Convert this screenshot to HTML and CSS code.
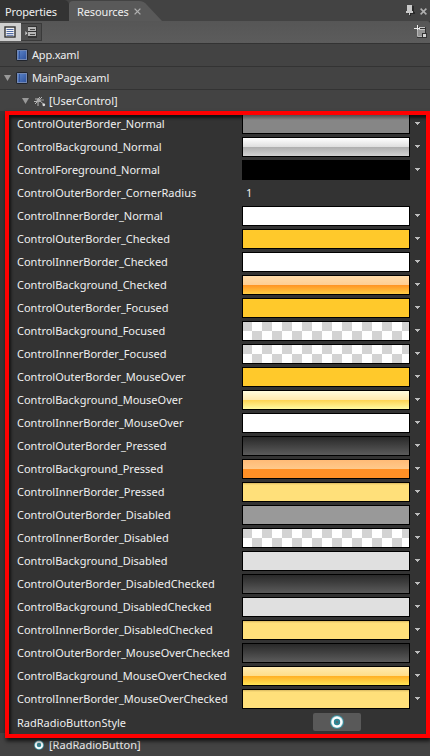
FILE: index.html
```
<!DOCTYPE html>
<html lang="en">
<head>
<meta charset="utf-8">
<title>Resources</title>
<link rel="stylesheet" href="styles.css">
</head>
<body>
<svg width="0" height="0" class="defs">
  <defs>
    <linearGradient id="blue" x1="0" y1="0" x2="1" y2="1"><stop offset="0" stop-color="#5d87cc"/><stop offset="1" stop-color="#2f529c"/></linearGradient>
    <symbol id="doc" viewBox="0 0 12 12"><rect x=".5" y=".5" width="11" height="11" rx="1" fill="#263556" stroke="#20242c"/><rect x="1.5" y="1.5" width="9" height="9" fill="url(#blue)" stroke="#7388b3"/><path d="M3.5 2v8" stroke="#34559b"/></symbol>
    <symbol id="radio" viewBox="0 0 14 14"><circle cx="7" cy="7" r="7" fill="#3b8b99"/><circle cx="7" cy="7" r="6" fill="#c5e2e8"/><circle cx="7" cy="7" r="5.2" fill="#fff"/><circle cx="7" cy="7" r="3.2" fill="#2e8797"/><circle cx="7" cy="7" r="1.2" fill="#5a6c70"/></symbol>
  </defs>
</svg>
<div class="panel">
  <header class="tabs">
    <div class="tab"><span>Properties</span></div>
    <div class="tab-active">
      <svg class="tab-shape" width="94" height="21" viewBox="0 0 94 21"><path d="M0 21V5q0-4 4-4h66q5 0 8 4l15 16z" fill="#595959"/></svg>
      <span>Resources</span>
      <svg class="close" width="7" height="7" viewBox="0 0 7 7"><path d="M.6.6l5.8 5.8M6.4.6L.6 6.4" stroke="#b0b0b0" stroke-width="1.3"/></svg>
    </div>
    <svg class="pin" width="11" height="12" viewBox="0 0 11 12"><path d="M3 1h6v6h1v2H6v2H5V9H3z" fill="#292929"/><path d="M2 0h5v6H2z" fill="#c9c9c9"/><path d="M1 6h7v2H1zM4 8h1v2H4z" fill="#c9c9c9"/></svg>
    <svg class="panel-close" width="7" height="7" viewBox="0 0 7 7"><path d="M.6.6l5.8 5.8M6.4.6L.6 6.4" stroke="#b0b0b0" stroke-width="1.5"/></svg>
  </header>
  <div class="toolbar">
    <div class="tool on"><svg width="12" height="12" viewBox="0 0 12 12"><rect x="1" y="1" width="10" height="10" fill="#f4f4f4" stroke="#333" stroke-width="1.4"/><path d="M2.5 3.5h7M2.5 5.5h7M2.5 7.5h7M2.5 9.3h7" stroke="#526ca6"/></svg></div>
    <div class="tool"><svg width="12" height="12" viewBox="0 0 12 12"><path d="M3 0h9v12H3z" fill="#333"/><path d="M3 1h8v4H3zM3 6h8v4H3z" fill="#b5b5b5"/><path d="M5 3.5h5M5 8.5h5" stroke="#444"/><path d="M0 4.5l3 2.7L0 10z" fill="#ccc" stroke="#333" stroke-width=".6"/></svg></div>
    <svg class="add" width="13" height="14" viewBox="0 0 13 14"><path d="M3 2h9v11H3z" fill="#333"/><path d="M4 4h7v7H4z" fill="#929292"/><path d="M5 2.5h6M5 4.5h6" stroke="#c4c4c4"/><path d="M0 3.5h6M3.5 0v6" stroke="#ededed"/><path d="M3.5 5v6.5H8" fill="none" stroke="#b5b5b5"/><rect x="8.5" y="8.5" width="4" height="4" fill="#d5d5d5" stroke="#333"/></svg>
  </div>
  <div class="tree">
    <div class="node"><i class="gap"></i><svg class="doc" width="12" height="12"><use href="#doc"/></svg><span>App.xaml</span></div>
    <div class="node"><svg class="exp" width="7" height="6" viewBox="0 0 7 6"><path d="M0 0h7L3.5 6z" fill="#999"/></svg><svg class="doc" width="12" height="12"><use href="#doc"/></svg><span>MainPage.xaml</span></div>
    <div class="node user"><svg class="exp" width="7" height="6" viewBox="0 0 7 6"><path d="M0 0h7L3.5 6z" fill="#999"/></svg><svg class="tools" width="12" height="11" viewBox="0 0 12 11"><path d="M1 3h3l2-2M0 5.5h4M1 8l2.5-2.5M4 6v4M5 4l5 4.5M6 3l2-2" stroke="#b5b5b5" fill="none"/><circle cx="4.7" cy="4.3" r="2" fill="#aaa"/><circle cx="9.8" cy="8.8" r="1.4" fill="#ddd"/><path d="M7 4h3" stroke="#999"/></svg><span>[UserControl]</span></div>
  </div>
  <div class="frame">
    <div class="row"><span>ControlOuterBorder_Normal</span><b class="sw gray-top"></b><i class="arr"></i></div>
    <div class="row"><span>ControlBackground_Normal</span><b class="sw silver"></b><i class="arr"></i></div>
    <div class="row"><span>ControlForeground_Normal</span><b class="sw black"></b><i class="arr"></i></div>
    <div class="row"><span>ControlOuterBorder_CornerRadius</span><em>1</em></div>
    <div class="row"><span>ControlInnerBorder_Normal</span><b class="sw white"></b><i class="arr"></i></div>
    <div class="row"><span>ControlOuterBorder_Checked</span><b class="sw amber"></b><i class="arr"></i></div>
    <div class="row"><span>ControlInnerBorder_Checked</span><b class="sw white"></b><i class="arr"></i></div>
    <div class="row"><span>ControlBackground_Checked</span><b class="sw checked"></b><i class="arr"></i></div>
    <div class="row"><span>ControlOuterBorder_Focused</span><b class="sw amber"></b><i class="arr"></i></div>
    <div class="row"><span>ControlBackground_Focused</span><b class="sw clear"></b><i class="arr"></i></div>
    <div class="row"><span>ControlInnerBorder_Focused</span><b class="sw clear"></b><i class="arr"></i></div>
    <div class="row"><span>ControlOuterBorder_MouseOver</span><b class="sw amber"></b><i class="arr"></i></div>
    <div class="row"><span>ControlBackground_MouseOver</span><b class="sw over"></b><i class="arr"></i></div>
    <div class="row"><span>ControlInnerBorder_MouseOver</span><b class="sw white"></b><i class="arr"></i></div>
    <div class="row"><span>ControlOuterBorder_Pressed</span><b class="sw dark"></b><i class="arr"></i></div>
    <div class="row"><span>ControlBackground_Pressed</span><b class="sw pressed"></b><i class="arr"></i></div>
    <div class="row"><span>ControlInnerBorder_Pressed</span><b class="sw cream"></b><i class="arr"></i></div>
    <div class="row"><span>ControlOuterBorder_Disabled</span><b class="sw gray"></b><i class="arr"></i></div>
    <div class="row"><span>ControlInnerBorder_Disabled</span><b class="sw clear"></b><i class="arr"></i></div>
    <div class="row"><span>ControlBackground_Disabled</span><b class="sw light"></b><i class="arr"></i></div>
    <div class="row"><span>ControlOuterBorder_DisabledChecked</span><b class="sw dark"></b><i class="arr"></i></div>
    <div class="row"><span>ControlBackground_DisabledChecked</span><b class="sw light"></b><i class="arr"></i></div>
    <div class="row"><span>ControlInnerBorder_DisabledChecked</span><b class="sw cream"></b><i class="arr"></i></div>
    <div class="row"><span>ControlOuterBorder_MouseOverChecked</span><b class="sw dark"></b><i class="arr"></i></div>
    <div class="row"><span>ControlBackground_MouseOverChecked</span><b class="sw overchecked"></b><i class="arr"></i></div>
    <div class="row"><span>ControlInnerBorder_MouseOverChecked</span><b class="sw cream"></b><i class="arr"></i></div>
    <div class="row style"><span>RadRadioButtonStyle</span><div class="btn"><svg width="14" height="14"><use href="#radio"/></svg></div></div>
  </div>
  <div class="footer"><svg width="10" height="10"><use href="#radio"/></svg><span>[RadRadioButton]</span></div>
</div>
</body>
</html>
```
FILE: styles.css
```
* { box-sizing: border-box; }
body { margin: 0; background: #434343; }
.defs { display: block; height: 0; }
.panel {
  width: 430px; height: 756px; overflow: hidden;
  display: flex; flex-direction: column;
  background: #363636; color: #efefef;
  font: 11px/16px "Noto Sans", "Open Sans", sans-serif;
  white-space: nowrap;
}
svg { flex: none; display: block; }
.tabs { height: 21px; flex: none; display: flex; background: #434343; }
.tab { width: 69px; padding: 4px 0 0 5px; background: #333; border-radius: 0 5px 0 0; letter-spacing: -.15px; }
.tab-active { position: relative; width: 94px; display: flex; padding: 4px 0 0 8px; letter-spacing: -.12px; }
.tab-active span { position: relative; width: 57px; }
.tab-shape { position: absolute; left: 0; top: 0; }
.close { position: relative; margin-top: 4px; }
.pin { margin: 5px 0 0 242px; }
.panel-close { margin: 8px 0 0 4px; }
.toolbar { height: 22px; flex: none; display: flex; background: linear-gradient(#565656, #5c5c5c); padding-top: 2px; border-radius: 0 3px 0 0; }
.tool { width: 21px; height: 18px; display: flex; align-items: center; justify-content: center; background: #4d4d4d; border: 1px solid #3a3a3a; border-left: 0; }
.tool.on { background: #d0d0d0; border-color: #d0d0d0; }
.add { margin: 2px 3px 0 auto; }
.tree { height: 68px; flex: none; background: #434343; }
.node { height: 23px; border-top: 1px solid #333; display: flex; align-items: center; letter-spacing: -.2px; }
.gap { width: 16px; }
.exp { margin-left: 4px; margin-right: 5px; }
.doc { margin-right: 4px; }
.user { letter-spacing: -.08px; }
.user .exp { margin-left: 22px; }
.tools { margin-right: 3px; }
.frame {
  position: relative; flex: none; height: 627px; margin-left: 5px;
  border: 4px solid #f00; background: #333; padding-left: 8px;
  box-shadow: 1px 3px 4px rgba(0,0,0,.75), inset 2px 3px 3px rgba(0,0,0,.65);
}
.row { height: 23px; display: flex; align-items: flex-start; }
.row:first-child { height: 22px; }
.row span { width: 225px; flex: none; padding-top: 2px; }
.row:first-child span { padding-top: 1px; }
.row em { font-style: normal; padding: 2px 0 0 4px; }
.sw { width: 168px; height: 20px; border: 1px solid #000; flex: none; }
.row:first-child .sw { height: 19px; border-top: 0; }
.arr { width: 5px; height: 3px; margin: 8px 0 0 5px; background: #bbb; clip-path: polygon(0 0, 100% 0, 100% 1px, 4px 1px, 4px 2px, 3px 2px, 3px 3px, 2px 3px, 2px 2px, 1px 2px, 1px 1px, 0 1px); }
.row:first-child .arr { margin-top: 7px; }
.gray-top { background: linear-gradient(#505050, #707070 3px, #868686 5px, #868686); }
.silver { background: linear-gradient(#fff, #dedede 50%, #adadad 50%, #d2d2d2); }
.black { background: #000; }
.white { background: #fff; }
.amber { background: #ffc92b; }
.checked { background: linear-gradient(#ffdcab, #ffce91 50%, #ff9322 50%, #ffcd43); }
.clear { background: conic-gradient(#fff 25%, #d3d3d3 0 50%, #fff 0 75%, #d3d3d3 0) -1px -1px / 20px 20px; }
.over { background: linear-gradient(#fffcdc, #ffeaae 50%, #fdd352 50%, #fffba2); }
.dark { background: linear-gradient(#292929, #5b5b5b); }
.pressed { background: linear-gradient(#ffba76, #ffc98b 50%, #ff9026 50%); }
.cream { background: linear-gradient(#d8b860, #ffe07a 2px); }
.gray { background: #999; }
.light { background: #e0e0e0; }
.overchecked { background: linear-gradient(#ffebb0, #ffdd88 50%, #ffae24 50%, #ffe555); }
.style span { padding-top: 3px; }
.btn { width: 48px; height: 18px; margin: 1px 0 0 71px; border-radius: 2px; background: #595959; display: flex; align-items: center; justify-content: center; }
.footer { flex: 1; background: #434343; display: flex; align-items: flex-start; padding-left: 34px; margin-top: -5px; }
.footer svg { margin-top: 7px; }
.footer span { padding: 4px 0 0 5px; }
```
